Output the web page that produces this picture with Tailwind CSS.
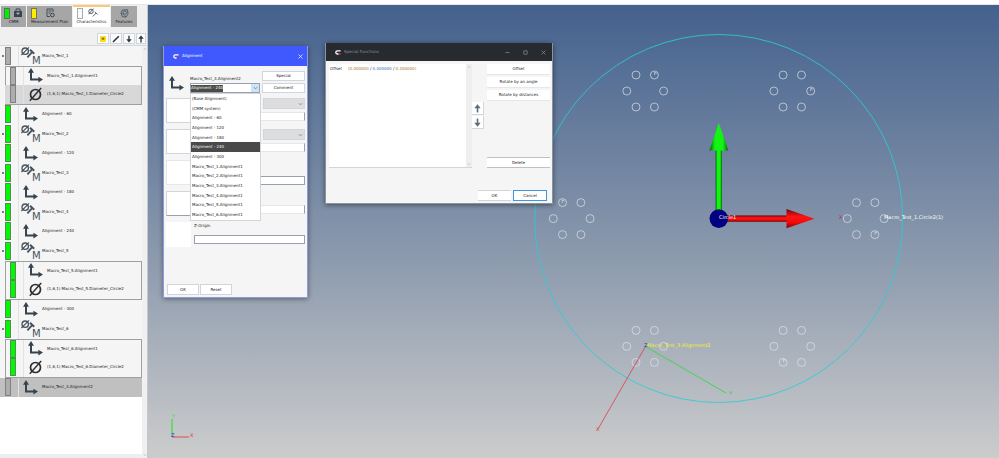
<!DOCTYPE html>
<html lang="en">
<head>
    <meta charset="UTF-8">
    <meta name="viewport" content="width=device-width, initial-scale=1.0">
    <title>Measurement Plan</title>
    <script src="https://cdn.jsdelivr.net/npm/@tailwindcss/browser@4"></script>
</head>
<body class="h-screen flex flex-col overflow-hidden bg-white font-['DejaVu_Sans',sans-serif] text-[4px] leading-[6px] text-[#222]">
    <!-- Shared icons -->
    <svg class="hidden">
        <symbol id="icon-axes" viewBox="0 0 15 15">
            <path d="M3 3.5V11.6H11" fill="none" stroke="#37444f" stroke-width="2"/>
            <path d="M3 0L0 4.8H6ZM15 11.6L10.4 8.8V14.4Z" fill="#37444f"/>
        </symbol>
        <symbol id="icon-diameter" viewBox="0 0 15 15">
            <circle cx="7.5" cy="7.5" r="5" fill="none" stroke="#2a2f33" stroke-width="1.7"/>
            <path d="M1.8 13.8L13.2 1" stroke="#2a2f33" stroke-width="1.4"/>
        </symbol>
        <symbol id="icon-macro" viewBox="0 0 20 18">
            <g fill="none" stroke="#46535e">
                <circle cx="4.2" cy="4.2" r="3.2" stroke-width="1.3"/>
                <path d="M.4 8L8 .4" stroke-width="1.1"/>
                <path d="M6.4 10.4L11.6 4.6" stroke-width="1.8"/>
                <path d="M9 2.8L13.2 6.8" stroke-width="2"/>
            </g>
            <text x="11" y="17.4" font-size="10" fill="#46535e">M</text>
        </symbol>
        <symbol id="icon-logo" viewBox="0 0 6 5">
            <path d="M5.6 .9H2.4Q.8 1 .8 2.4T2.4 4H3.6" fill="none" stroke="#fff" stroke-width="1.3"/>
            <path d="M3.8 3.2H5.8V4.8H4.4Z" fill="#e5202c"/>
        </symbol>
        <symbol id="icon-up" viewBox="0 0 8 10">
            <path d="M4 9.5V3" stroke="currentColor" stroke-width="1.8"/>
            <path d="M4 .2L.4 4.6H7.6Z" fill="currentColor"/>
        </symbol>
        <symbol id="icon-chevron" viewBox="0 0 6 4">
            <path d="M1 1L3 3L5 1" fill="none" stroke="currentColor" stroke-width=".8"/>
        </symbol>
    </svg>

    <div class="h-[5px] shrink-0 border-b border-gray-200"></div>

    <div class="flex flex-1 min-h-0">
        <!-- Sidebar -->
        <aside class="w-[148px] shrink-0 flex flex-col bg-[#f0f0f0] border-r border-[#c4c8cc]">
            <nav class="flex items-end h-[22px] gap-px pl-px">
                <button class="w-[25px] h-[21px] bg-[#a6a6a6] flex flex-col items-center">
                    <span class="flex gap-[3px] pt-[2px]">
                        <span class="w-[6px] h-[11px] bg-[#00f000] border border-[#557755]"></span>
                        <svg class="w-[10px] h-[10px]" viewBox="0 0 10 10"><path d="M1 3H9V9H1Z" fill="#37444f"/><path d="M3 3V1H7V3" fill="none" stroke="#37444f"/><path d="M3.5 4.5V5.6L5 7L6.5 5.6V4.5Z" fill="#a6a6a6"/></svg>
                    </span>
                    <span>CMM</span>
                </button>
                <button class="w-[45px] h-[21px] bg-[#a6a6a6] flex flex-col items-center">
                    <span class="flex gap-[9px] pt-[2px] pr-[14px]">
                        <span class="w-[6px] h-[11px] bg-[#ffeb00] border border-[#777755]"></span>
                        <svg class="w-[9px] h-[10px]" viewBox="0 0 9 10"><path d="M7 4V1H1V8.5H4M2.5 3H5.5M2.5 5H4.5" fill="none" stroke="#37444f" stroke-width=".9"/><circle cx="6.4" cy="7" r="1.8" fill="none" stroke="#37444f"/></svg>
                    </span>
                    <span>Measurement Plan</span>
                </button>
                <button class="w-[37px] h-[22px] bg-white border-t-2 border-[#fcc878] flex flex-col items-center">
                    <span class="flex gap-[5px] pt-px pr-[8px]">
                        <span class="w-[6px] h-[11px] bg-[#fafafa] border border-[#aaaaaa]"></span>
                        <svg class="w-[10px] h-[10px]" viewBox="0 0 10 10"><g fill="none" stroke="#46535e" stroke-width=".9"><circle cx="3" cy="3.4" r="2.2"/><path d="M.5 6.2L5.6 .6M4.8 8.5L8.2 5M6.8 3.8L9.6 6.4"/></g></svg>
                    </span>
                    <span>Characteristics</span>
                </button>
                <button class="w-[26px] h-[21px] bg-[#a6a6a6] flex flex-col items-center">
                    <svg class="w-[9px] h-[9px] mt-[3px] mb-px" viewBox="0 0 9 9"><path d="M2.5 1L7.5 .8L8 5L6 8L2.4 7.8L1 4Z" fill="none" stroke="#46535e" stroke-width=".9"/><circle cx="4.8" cy="3.6" r="1.6" fill="none" stroke="#46535e" stroke-width=".8"/><path d="M1 4L4 5.6L6 8" fill="none" stroke="#46535e" stroke-width=".7"/></svg>
                    <span>Features</span>
                </button>
            </nav>

            <div class="flex justify-end gap-px pt-[6px] pb-px pr-px">
                <button aria-label="Note" class="w-[12px] h-[11px] bg-white border border-gray-300 flex items-center justify-center"><span class="w-[6px] h-[6px] bg-[#ffdc1e] text-center text-[#665500]">≡</span></button>
                <button aria-label="Edit" class="w-[12px] h-[11px] bg-[#fafafa] border border-gray-300 flex items-center justify-center"><svg class="w-[8px] h-[8px]" viewBox="0 0 8 8"><path d="M1 7L6.8 1.2" stroke="#2a343c" stroke-width="1.6"/></svg></button>
                <button aria-label="Move down" class="w-[12px] h-[11px] bg-[#fafafa] border border-gray-300 flex items-center justify-center text-[#2a343c]"><svg class="w-[6px] h-[8px] rotate-180"><use href="#icon-up"/></svg></button>
                <button aria-label="Move up" class="w-[10px] h-[11px] bg-[#fafafa] border border-gray-300 flex items-center justify-center text-[#2a343c]"><svg class="w-[6px] h-[8px]"><use href="#icon-up"/></svg></button>
            </div>

            <div class="flex flex-1 min-h-0 border-t border-gray-300">
                <div class="flex-1 bg-white border-b-4 border-[#eeeeee]">
                    <ul id="tree" class="grid auto-rows-fr h-[351px] bg-[#f5f5f5]"></ul>
                </div>
                <div class="w-[5px] flex flex-col justify-between items-center py-px text-gray-400">
                    <svg class="w-[4px] h-[4px] rotate-180"><use href="#icon-chevron"/></svg>
                    <svg class="w-[4px] h-[4px]"><use href="#icon-chevron"/></svg>
                </div>
            </div>
        </aside>

        <!-- 3D view -->
        <main class="relative flex-1 min-w-0 bg-linear-to-b from-[#44618d] via-[#8796ab] via-52% to-[#cccccc]">
            <svg class="block w-full h-full text-[5px]" viewBox="148 5 851 453" preserveAspectRatio="xMidYMid slice">
                <defs>
                    <linearGradient id="cone-y"><stop offset="0" stop-color="#0b6010"/><stop offset=".3" stop-color="#12f512"/><stop offset=".7" stop-color="#12f512"/><stop offset="1" stop-color="#0b6010"/></linearGradient>
                    <linearGradient id="cone-x" x2="0" y2="1"><stop offset="0" stop-color="#700808"/><stop offset=".4" stop-color="#ff1414"/><stop offset=".7" stop-color="#f50a0a"/><stop offset="1" stop-color="#700808"/></linearGradient>
                    <g id="holes" fill="none" stroke="#dfe6ee" stroke-opacity=".75" stroke-width=".9">
                        <circle cx="-18.4" r="4"/><circle cx="18.4" r="4"/>
                        <circle cx="-9.2" cy="-16" r="4"/><circle cx="9.2" cy="-16" r="4"/>
                        <circle cx="-9.2" cy="16" r="4"/><circle cx="9.2" cy="16" r="4"/>
                    </g>
                    <path id="mark" d="M.3 0V-2.8L2.4 -1.6" fill="none" stroke="#e4eaf0" stroke-opacity=".8" stroke-width=".8"/>
                </defs>
                <circle cx="718.7" cy="218.5" r="184" fill="none" stroke="#2ccbd6" stroke-opacity=".85"/>
                <use href="#holes" x="645.2" y="91"/>
                <use href="#holes" x="792.3" y="91"/>
                <use href="#holes" x="571.7" y="218.6"/>
                <use href="#holes" x="865.7" y="218.6"/>
                <use href="#holes" x="645.2" y="346.4"/>
                <use href="#holes" x="792.3" y="346.4"/>
                <use href="#mark" x="654.4" y="75"/>
                <use href="#mark" x="810.5" y="91"/>
                <use href="#mark" x="562" y="202.6"/>
                <use href="#mark" x="874.8" y="234.6"/>
                <use href="#mark" x="783.2" y="362"/>

                <rect x="715.6" y="149" width="6.4" height="62" fill="url(#cone-y)"/>
                <path d="M718.8 123L709.4 150.5H728.4Z" fill="url(#cone-y)"/>
                <rect x="726" y="215.4" width="62" height="6.4" fill="url(#cone-x)"/>
                <path d="M814.5 218.7L786.5 209V228.2Z" fill="url(#cone-x)"/>
                <circle cx="718.8" cy="218.6" r="9.3" fill="#000080"/>
                <text x="719" y="219" fill="#ffffff">Circle1</text>
                <text x="719" y="97" font-size="4" fill="#24b04c">Y</text>
                <text x="839" y="219" fill="#d02038">X</text>
                <text x="884" y="219" fill="#ffffff">Macro_Test_1.Circle2(1)</text>

                <path d="M645.5 346.5L598 429" stroke="#e0343c" stroke-opacity=".75"/>
                <path d="M645.5 346.5L726 393" stroke="#44d44c"/>
                <text x="647" y="347" fill="#f0f01e">Macro_Test_3.Alignment2</text>
                <text x="644" y="347" fill="#2030d0">Z</text>
                <text x="596" y="431" fill="#e0343c">X</text>
                <text x="729" y="395" fill="#34cc40">Y</text>

                <path d="M172 437V419" stroke="#44e044" stroke-width="1.4"/>
                <path d="M172 437H189" stroke="#e04c50"/>
                <text x="172" y="418" fill="#44e044">Y</text>
                <text x="190" y="437" fill="#e0343c">X</text>
                <text x="171" y="437" fill="#2830e0">Z</text>
            </svg>

            <!-- Alignment window -->
            <section class="absolute left-[15px] top-[41px] w-[145px] bg-[#f5f5f5] border-x border-b border-[#8f9cdc] shadow-[0_1px_5px_#00000066]">
                <header class="h-[20px] bg-[#4059ff] text-white flex items-center pl-[9px] pr-[4px]">
                    <svg class="w-[6px] h-[5px] mr-[3px]"><use href="#icon-logo"/></svg>
                    <h2 class="flex-1">Alignment</h2>
                    <button aria-label="Close"><svg class="w-[5px] h-[5px]" viewBox="0 0 5 5"><path d="M.5 .5L4.5 4.5M4.5 .5L.5 4.5" stroke="#fff" stroke-width=".7"/></svg></button>
                </header>

                <div class="flex pt-[5px] pl-[5px] pr-[2px]">
                    <svg class="w-[15px] h-[15px] mt-[5px] mr-[6px]"><use href="#icon-axes"/></svg>
                    <div class="relative w-[70px] mr-[2px] pt-[5px]">
                        <label for="base" class="block h-[7px]">Macro_Test_3.Alignment2</label>
                        <div class="flex items-center h-[10px] bg-white border border-gray-400">
                            <select id="base" class="appearance-none w-[32px] h-[7px] bg-[#4a4a4a] text-white">
                                <option>Alignment - 240</option>
                            </select>
                            <span class="ml-auto w-[8px] h-[8px] bg-[#cce4f7] text-[#4a6a88] flex items-center justify-center"><svg class="w-[5px] h-[4px]"><use href="#icon-chevron"/></svg></span>
                        </div>
                        <ul id="base-list" class="absolute z-10 left-0 top-[22px] w-[71px] h-[128px] grid auto-rows-fr bg-white border border-gray-300"></ul>
                    </div>
                    <div class="flex-1 flex flex-col gap-[2px]">
                        <button class="h-[10px] bg-white border border-gray-300 leading-[8px]">Special</button>
                        <button class="h-[10px] bg-white border border-gray-300 leading-[8px]">Comment</button>
                    </div>
                </div>

                <div class="pt-[5px] pl-[2px] pr-[2px]">
                    <div class="flex gap-[3px] h-[31px]">
                        <div class="w-[25px] h-[25px] bg-white border border-gray-300"></div>
                        <div class="flex-1 flex flex-col">
                            <span class="relative ml-[69px] h-[11px] mb-[3px]">
                                <select aria-label="Space axis" class="appearance-none block w-full h-[11px] bg-[#dddddd] border border-gray-300"></select>
                                <svg class="absolute right-[2px] top-[4px] w-[5px] h-[4px] text-gray-500"><use href="#icon-chevron"/></svg>
                            </span>
                            <input aria-label="Space rotation" class="h-[9px] bg-white border border-gray-200 border-r-gray-400">
                        </div>
                    </div>
                    <div class="flex gap-[3px] h-[31px]">
                        <div class="w-[25px] h-[25px] bg-white border border-gray-300"></div>
                        <div class="flex-1 flex flex-col">
                            <span class="relative ml-[69px] h-[11px] mb-[3px]">
                                <select aria-label="Planar axis" class="appearance-none block w-full h-[11px] bg-[#dddddd] border border-gray-300"></select>
                                <svg class="absolute right-[2px] top-[4px] w-[5px] h-[4px] text-gray-500"><use href="#icon-chevron"/></svg>
                            </span>
                            <input aria-label="Planar rotation" class="h-[9px] bg-white border border-gray-200 border-r-gray-400">
                        </div>
                    </div>
                    <div class="flex gap-[3px] h-[31px]">
                        <div class="w-[25px] h-[25px] bg-white border border-gray-200"></div>
                        <input aria-label="X-Origin" class="flex-1 min-w-0 mt-[16px] h-[9px] bg-white border border-gray-400">
                    </div>
                    <div class="flex gap-[3px] h-[31px]">
                        <div class="w-[25px] h-[25px] bg-white border border-gray-300 border-b-gray-400"></div>
                        <input aria-label="Y-Origin" class="flex-1 min-w-0 mt-[14px] h-[9px] bg-white border border-gray-200 border-r-gray-400">
                    </div>
                    <div class="flex gap-[3px] h-[31px]">
                        <div class="w-[25px] h-[25px] bg-white"></div>
                        <div class="flex-1 flex flex-col">
                            <label for="z-origin" class="h-[13px] pt-px">Z-Origin</label>
                            <input id="z-origin" class="h-[9px] bg-white border border-gray-400">
                        </div>
                    </div>
                </div>

                <footer class="flex gap-px pt-[31px] pb-[2px] pl-[3px]">
                    <button class="w-[32px] h-[11px] bg-white border border-gray-300 leading-[9px]">OK</button>
                    <button class="w-[32px] h-[11px] bg-white border border-gray-300 leading-[9px]">Reset</button>
                </footer>
            </section>

            <!-- Special Functions window -->
            <section class="absolute left-[177px] top-[38px] w-[228px] bg-[#f5f5f5] border border-[#8c939c] border-t-0 shadow-[0_1px_5px_#00000077]">
                <header class="h-[18px] bg-[#272b30] text-[#888e94] flex items-center pl-[9px] pr-[6px]">
                    <svg class="w-[6px] h-[5px] mr-[3px]"><use href="#icon-logo"/></svg>
                    <h2 class="flex-1">Special Functions</h2>
                    <div class="flex gap-[13px]">
                        <button aria-label="Minimize"><svg class="w-[5px] h-[5px]" viewBox="0 0 5 5"><path d="M.5 2.5H4.5" stroke="currentColor" stroke-width=".7"/></svg></button>
                        <button aria-label="Maximize"><svg class="w-[5px] h-[5px]" viewBox="0 0 5 5"><path d="M.8 .8H4.2V4.2H.8Z" fill="none" stroke="currentColor" stroke-width=".7"/></svg></button>
                        <button aria-label="Close"><svg class="w-[5px] h-[5px]" viewBox="0 0 5 5"><path d="M.5 .5L4.5 4.5M4.5 .5L.5 4.5" stroke="currentColor" stroke-width=".7"/></svg></button>
                    </div>
                </header>
                <div class="flex pt-[3px] pl-[3px] pr-[2px]">
                    <div class="flex-1 flex h-[104px] bg-white border-b border-gray-300">
                        <p class="flex-1 flex gap-[6px] pt-[2px] pl-px whitespace-nowrap"><span>Offset</span><span><span class="text-[#a8702c]">(0.000000</span> / <span class="text-[#2c6cb0]">0.000000</span> / <span class="text-[#a8702c]">0.200000)</span></span></p>
                        <div class="w-[6px] bg-[#efefef] flex flex-col justify-between items-center py-px text-gray-400">
                            <svg class="w-[4px] h-[4px] rotate-180"><use href="#icon-chevron"/></svg>
                            <svg class="w-[4px] h-[4px]"><use href="#icon-chevron"/></svg>
                        </div>
                    </div>
                    <div class="flex flex-col gap-px pt-[38px] mr-[3px] text-[#5c6b78]">
                        <button aria-label="Up" class="w-[12px] h-[13px] bg-white border-r border-b border-gray-300 flex items-center justify-center"><svg class="w-[7px] h-[9px]"><use href="#icon-up"/></svg></button>
                        <button aria-label="Down" class="w-[12px] h-[13px] bg-white border-r border-b border-gray-300 flex items-center justify-center"><svg class="w-[7px] h-[9px] rotate-180"><use href="#icon-up"/></svg></button>
                    </div>
                    <div class="w-[63px] flex flex-col gap-[2px]">
                        <button class="h-[11px] bg-white border-b border-gray-200">Offset</button>
                        <button class="h-[11px] bg-white border-b border-gray-200">Rotate by an angle</button>
                        <button class="h-[11px] bg-white border-b border-gray-200">Rotate by distances</button>
                        <button class="h-[11px] mt-auto bg-white border-y border-[#c0c0c0]">Delete</button>
                    </div>
                </div>
                <footer class="flex justify-end gap-[2px] pt-[22px] pr-[5px] pb-[2px]">
                    <button class="w-[33px] h-[11px] bg-white border-y border-gray-300">OK</button>
                    <button class="w-[34px] h-[11px] bg-white border border-[#3c96e0]">Cancel</button>
                </footer>
            </section>
        </main>
    </div>

    <script>
        const tree = [
            { icon: 'macro', name: 'Macro_Test_1', state: 'gray', children: [
                { icon: 'axes', name: 'Macro_Test_1.Alignment1', state: 'gray' },
                { icon: 'diameter', name: '(1,6,1) Macro_Test_1.Diameter_Circle2', state: 'gray', active: true }
            ] },
            { icon: 'axes', name: 'Alignment - 60' },
            { icon: 'macro', name: 'Macro_Test_2' },
            { icon: 'axes', name: 'Alignment - 120' },
            { icon: 'macro', name: 'Macro_Test_3' },
            { icon: 'axes', name: 'Alignment - 180' },
            { icon: 'macro', name: 'Macro_Test_4' },
            { icon: 'axes', name: 'Alignment - 240' },
            { icon: 'macro', name: 'Macro_Test_5', children: [
                { icon: 'axes', name: 'Macro_Test_5.Alignment1' },
                { icon: 'diameter', name: '(1,6,1) Macro_Test_5.Diameter_Circle2' }
            ] },
            { icon: 'axes', name: 'Alignment - 300' },
            { icon: 'macro', name: 'Macro_Test_6', children: [
                { icon: 'axes', name: 'Macro_Test_6.Alignment1' },
                { icon: 'diameter', name: '(1,6,1) Macro_Test_6.Diameter_Circle2' }
            ] },
            { icon: 'axes', name: 'Macro_Test_3.Alignment2', state: 'gray', selected: true }
        ];

        function row(item, nested) {
            const bar = item.state === 'gray' ? 'bg-[#adadad] border-[#808080]' : 'bg-[#00f800] border-[#5a8a5a]';
            const icon = item.icon === 'macro' ? 'w-[20px] h-[18px] mr-px' : 'w-[15px] h-[15px] ml-[2px] mr-[4px]';
            const back = item.selected ? 'bg-[#c0c0c0]' : item.active ? 'bg-[#d8d8d8]' : '';
            const caret = item.icon === 'macro' ? '<span class="w-[2px] h-[2px] bg-[#555555] rounded-full"></span>' : '';
            return `
                <div class="flex items-center min-h-0 h-full ${back}">
                    <span class="w-[5px] flex justify-center">${nested ? '' : caret}</span>
                    <span class="w-[6px] h-[18px] border ${bar}"></span>
                    <span class="w-[8px] mr-[2px] self-stretch border-r border-[#e2e2e2]"></span>
                    <svg class="${icon}"><use href="#icon-${item.icon}"/></svg>
                    <span class="whitespace-nowrap">${item.name}</span>
                </div>`;
        }

        document.getElementById('tree').innerHTML = tree.map(item => {
            let html = `<li>${row(item, false)}</li>`;
            if (item.children) {
                html += `<li class="row-span-2 ml-[5px] border border-[#a0a0a0]"><ul class="grid auto-rows-fr h-full -ml-px">${item.children.map(c => `<li>${row(c, true)}</li>`).join('')}</ul></li>`;
            }
            return html;
        }).join('');

        const bases = ['(Base Alignment)', '(CMM system)', 'Alignment - 60', 'Alignment - 120', 'Alignment - 180', 'Alignment - 240', 'Alignment - 300',
            'Macro_Test_1.Alignment1', 'Macro_Test_2.Alignment1', 'Macro_Test_3.Alignment1', 'Macro_Test_4.Alignment1', 'Macro_Test_5.Alignment1', 'Macro_Test_6.Alignment1'];
        document.getElementById('base-list').innerHTML = bases.map(name => {
            const back = name === 'Alignment - 240' ? 'bg-[#4a4a4a] text-white' : '';
            return `<li class="flex items-center px-px whitespace-nowrap ${back}">${name}</li>`;
        }).join('');
    </script>
</body>
</html>
